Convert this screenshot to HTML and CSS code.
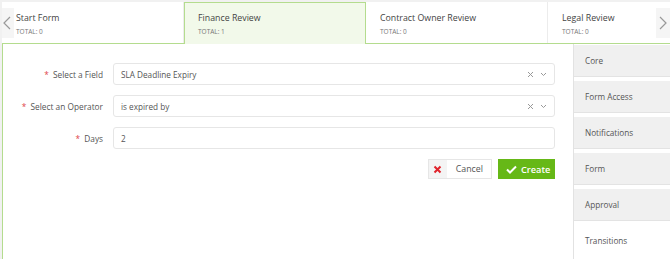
FILE: index.html
```html
<!DOCTYPE html>
<html>
<head>
    <title>Workflow Transitions</title>
    <link rel="stylesheet" href="styles.css">
</head>
<body>
    <div class="page">
        <div class="tabbar">
            <div class="scroll-btn left">
                <svg width="8" height="14" viewBox="0 0 8 14"><path d="M7 1 L1 7 L7 13" fill="none" stroke="#999" stroke-width="1.2"/></svg>
            </div>
            <div class="tab">
                <div class="tab-title">Start Form</div>
                <div class="tab-total">TOTAL: 0</div>
            </div>
            <div class="tab active">
                <div class="tab-title">Finance Review</div>
                <div class="tab-total">TOTAL: 1</div>
            </div>
            <div class="tab">
                <div class="tab-title">Contract Owner Review</div>
                <div class="tab-total">TOTAL: 0</div>
            </div>
            <div class="tab">
                <div class="tab-title">Legal Review</div>
                <div class="tab-total">TOTAL: 0</div>
            </div>
            <div class="scroll-btn right">
                <svg width="8" height="14" viewBox="0 0 8 14"><path d="M1 1 L7 7 L1 13" fill="none" stroke="#999" stroke-width="1.2"/></svg>
            </div>
        </div>

        <div class="panel">
            <div class="form">
                <label class="label"><span class="req">*</span> Select a Field</label>
                <div class="input select">
                    <span>SLA Deadline Expiry</span>
                    <span class="controls">
                        <svg width="7" height="7" viewBox="0 0 7 7"><path d="M1 1 L6 6 M6 1 L1 6" stroke="#999" stroke-width="1"/></svg>
                        <svg width="7" height="5" viewBox="0 0 7 5"><path d="M1 1 L3.5 3.5 L6 1" fill="none" stroke="#999" stroke-width="1"/></svg>
                    </span>
                </div>

                <label class="label"><span class="req">*</span> Select an Operator</label>
                <div class="input select">
                    <span>is expired by</span>
                    <span class="controls">
                        <svg width="7" height="7" viewBox="0 0 7 7"><path d="M1 1 L6 6 M6 1 L1 6" stroke="#999" stroke-width="1"/></svg>
                        <svg width="7" height="5" viewBox="0 0 7 5"><path d="M1 1 L3.5 3.5 L6 1" fill="none" stroke="#999" stroke-width="1"/></svg>
                    </span>
                </div>

                <label class="label"><span class="req">*</span> Days</label>
                <div class="input"><span>2</span></div>

                <div class="actions">
                    <button class="btn cancel">
                        <span class="btn-icon">
                            <svg width="9" height="9" viewBox="0 0 9 9"><path d="M1.5 1.5 L7.5 7.5 M7.5 1.5 L1.5 7.5" stroke="#e0232b" stroke-width="2"/></svg>
                        </span>
                        <span class="btn-text">Cancel</span>
                    </button>
                    <button class="btn create">
                        <svg class="check" width="11" height="9" viewBox="0 0 11 9"><path d="M1 4.5 L4 7.5 L10 1.5" fill="none" stroke="#fff" stroke-width="2"/></svg>
                        <span>Create</span>
                    </button>
                </div>
            </div>

            <div class="sidebar">
                <div class="side-item">Core</div>
                <div class="side-item">Form Access</div>
                <div class="side-item">Notifications</div>
                <div class="side-item">Form</div>
                <div class="side-item">Approval</div>
                <div class="side-item active">Transitions</div>
            </div>
        </div>
    </div>
</body>
</html>
```

FILE: styles.css
```css
body {
    font-family: "Open Sans", Arial, sans-serif;
    margin: 0;
    background: #f1f1f1;
    color: #555;
    overflow: hidden;
}
.page {
    margin: 2px 0 0 2px;
    background: #fff;
    height: 257px;
    overflow: hidden;
}
.tabbar {
    position: relative;
    display: flex;
    height: 41px;
    border-bottom: 1px solid #b4dc8e;
    background: #fff;
}
.tab {
    box-sizing: border-box;
    width: 182px;
    flex: none;
    padding: 10px 0 0 14px;
    border-right: 1px solid #ececec;
}
.tab.active {
    background: #f2f9ea;
    border: 1px solid #b4dc8e;
    border-bottom: none;
    height: 42px;
    padding: 9px 0 0 13px;
}
.tab-title {
    font-size: 8.8px;
    color: #444;
    line-height: 12px;
}
.tab-total {
    font-size: 6.5px;
    color: #777;
    margin-top: 3px;
}
.scroll-btn {
    position: absolute;
    top: 6px;
    width: 14px;
    height: 30px;
    background: #f5f5f5;
    display: flex;
    align-items: center;
    justify-content: center;
}
.scroll-btn.left {
    left: -2px;
}
.scroll-btn.right {
    right: 0;
}
.panel {
    display: flex;
    border-left: 1px solid #b4dc8e;
    height: 215px;
}
.form {
    flex: 1;
    display: grid;
    grid-template-columns: 100px 1fr;
    grid-auto-rows: 22px;
    column-gap: 10px;
    row-gap: 10px;
    padding: 19px 18px 0 0;
    align-content: start;
}
.label {
    font-size: 8.3px;
    text-align: right;
    align-self: center;
    color: #555;
}
.req {
    color: #e0434a;
    margin-right: 2px;
}
.input {
    border: 1px solid #e6e6e6;
    border-radius: 3px;
    display: flex;
    align-items: center;
    padding: 0 7px;
    font-size: 8.2px;
    color: #555;
}
.select {
    justify-content: space-between;
}
.controls {
    display: flex;
    align-items: center;
    gap: 6px;
}
.actions {
    grid-column: 2;
    display: flex;
    justify-content: flex-end;
    gap: 6px;
    height: 20px;
}
.btn {
    font-family: inherit;
    display: flex;
    align-items: center;
    padding: 0;
    border: 1px solid #e6e6e6;
    background: #fff;
    height: 20px;
    cursor: pointer;
}
.cancel .btn-icon {
    width: 18px;
    height: 18px;
    background: #f4f4f4;
    display: flex;
    align-items: center;
    justify-content: center;
}
.cancel .btn-text {
    font-size: 8.8px;
    color: #555;
    padding: 0 8px 0 9px;
}
.create {
    background: #66b817;
    border-color: #66b817;
    color: #fff;
    font-size: 9.2px;
    font-weight: 600;
    padding: 0 0 0 7px;
    gap: 4px;
    width: 57px;
}
.check {
    flex: none;
}
.sidebar {
    width: 96px;
    flex: none;
    border-left: 1px solid #e2e2e2;
    padding-top: 1px;
}
.side-item {
    height: 31px;
    background: #f0f0f0;
    border-bottom: 1px solid #e3e3e3;
    margin-bottom: 4px;
    font-size: 8.2px;
    color: #555;
    display: flex;
    align-items: center;
    padding-left: 11px;
}
.side-item.active {
    background: #fff;
    border-bottom: none;
}
```
